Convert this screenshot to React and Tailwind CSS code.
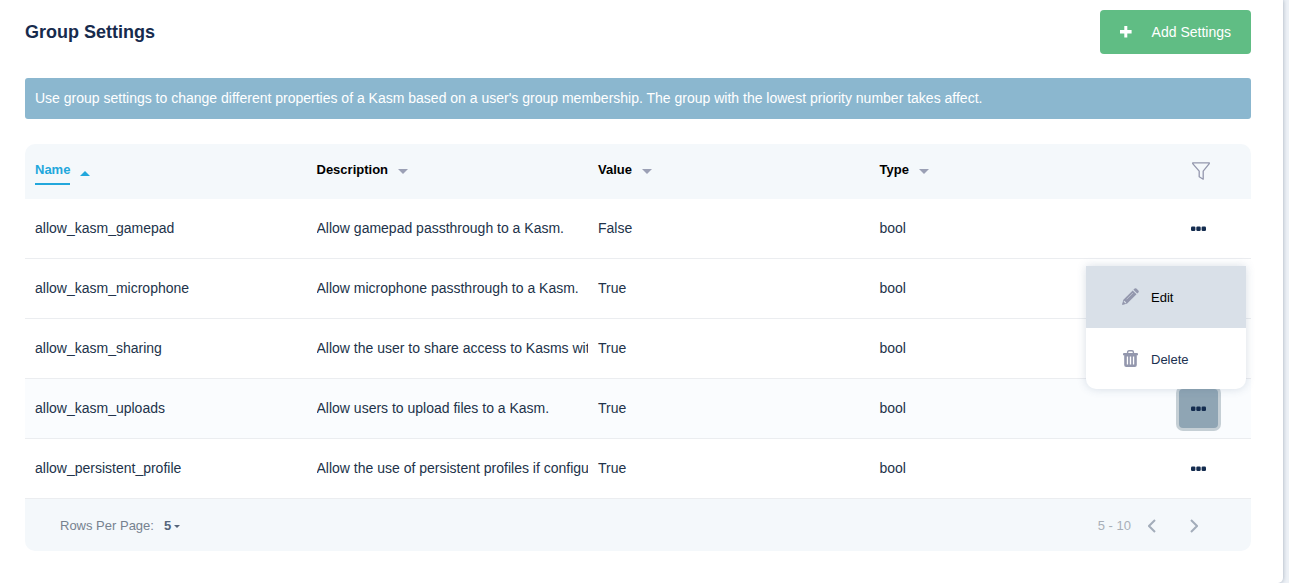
import { useState } from "react";

const columns = ["Name", "Description", "Value", "Type"];

const settings = [
    { name: "allow_kasm_gamepad", description: "Allow gamepad passthrough to a Kasm.", value: "False", type: "bool" },
    { name: "allow_kasm_microphone", description: "Allow microphone passthrough to a Kasm.", value: "True", type: "bool" },
    { name: "allow_kasm_sharing", description: "Allow the user to share access to Kasms with", value: "True", type: "bool" },
    { name: "allow_kasm_uploads", description: "Allow users to upload files to a Kasm.", value: "True", type: "bool" },
    { name: "allow_persistent_profile", description: "Allow the use of persistent profiles if configur", value: "True", type: "bool" },
];

const PlusIcon = () => (
    <svg width="12" height="12" viewBox="0 0 12 12" fill="currentColor" aria-hidden="true">
        <path d="M4.3 0H7.3V4H11.6V7.4H7.3V11.4H4.3V7.4H0V4H4.3Z" />
    </svg>
);

const CaretIcon = ({ up }) => (
    <svg width="10" height="7" viewBox="0 0 10 7" fill="currentColor" aria-hidden="true">
        <path d={up ? "M0 7L5 2L10 7Z" : "M0 0H10L5 5Z"} />
    </svg>
);

const FilterIcon = () => (
    <svg width="18" height="18" viewBox="0 0 18 18" fill="none" stroke="#9397ad" strokeWidth="1.3" strokeLinejoin="round" aria-hidden="true">
        <path d="M0.7 0.8H17.3V1.6L11.2 9.2V17.2L7.2 14.8V9.2L0.7 1.6Z" />
    </svg>
);

const DotsIcon = () => (
    <svg width="15" height="5" viewBox="0 0 15 5" fill="#142c4f" aria-hidden="true">
        <rect x="0" y="0.5" width="4.4" height="4.4" rx="1.2" />
        <rect x="5.3" y="0.5" width="4.4" height="4.4" rx="1.2" />
        <rect x="10.6" y="0.5" width="4.4" height="4.4" rx="1.2" />
    </svg>
);

const PencilIcon = () => (
    <svg width="17" height="17" viewBox="0 0 17 17" fill="#9397ad" aria-hidden="true">
        <path d="M11.4 1.8L12.6 0.6Q13.5 -0.2 14.4 0.6L16.4 2.6Q17.2 3.5 16.4 4.4L15.2 5.6Z" />
        <path d="M10.7 2.5L14.5 6.3L5.2 15.6L1.3 16.8Q-0.2 17.2 0.2 15.7L1.4 11.8Z" />
        <path d="M10.9 5L4.6 11.3" stroke="#c3c9d5" strokeWidth="0.8" />
        <path d="M2 13.2L3.8 15" stroke="#d9e0e8" strokeWidth="1.2" />
    </svg>
);

const TrashIcon = () => (
    <svg width="17" height="17" viewBox="0 0 17 17" aria-hidden="true">
        <path d="M5.6 3.4V2.2Q5.6 0.8 7 0.8H10Q11.4 0.8 11.4 2.2V3.4" fill="none" stroke="#9397ad" strokeWidth="1.4" />
        <path
            fill="#9397ad"
            fillRule="evenodd"
            d="M2 3H15Q16 3 16 4V5.2H1V4Q1 3 2 3ZM2.2 5.2H14.8V15Q14.8 17 12.8 17H4.2Q2.2 17 2.2 15ZM4.8 6.6V14.6H6.1V6.6ZM7.8 6.6V14.6H9.2V6.6ZM10.9 6.6V14.6H12.2V6.6Z"
        />
    </svg>
);

const Chevron = ({ d }) => (
    <svg width="8" height="14" viewBox="0 0 8 14" fill="none" stroke="#a3adba" strokeWidth="2" aria-hidden="true">
        <path d={d} />
    </svg>
);

const ActionMenu = () => (
    <div className="absolute right-[5px] bottom-[49px] z-10 w-40 overflow-hidden rounded-b-[10px] bg-white text-[13px] shadow-[0_0_10px_rgba(60,90,130,0.2)]">
        <button className="flex h-[62px] w-full items-center gap-3 bg-[#d9e0e8] pt-[2px] pl-9 text-black">
            <span className="mb-1">
                <PencilIcon />
            </span>
            Edit
        </button>
        <button className="flex h-[61px] w-full items-center gap-3 pt-[3px] pl-9 text-[#1b3150]">
            <span className="mb-1">
                <TrashIcon />
            </span>
            Delete
        </button>
    </div>
);

const SettingRow = ({ setting, open, onToggle }) => {
    const cell = "h-[60px] overflow-hidden border-b border-[#ebedf0] pb-[2px] pl-[10px] whitespace-nowrap";

    return (
        <tr className={open ? "bg-[#fafcfe]" : "bg-white"}>
            <td className={cell}>{setting.name}</td>
            <td className={cell}>
                <div className="overflow-hidden">{setting.description}</div>
            </td>
            <td className={cell}>{setting.value}</td>
            <td className={cell}>{setting.type}</td>
            <td className="h-[60px] border-b border-[#ebedf0] p-0">
                <div className="relative flex h-[59px] items-center justify-center pr-[5px]">
                    <button
                        aria-label={"Actions for " + setting.name}
                        aria-expanded={open}
                        onClick={onToggle}
                        className={
                            open
                                ? "flex h-[39px] w-[39px] items-center justify-center rounded bg-[#8fa5b4] ring-3 ring-[#c5cfd5]"
                                : "flex h-[39px] w-[39px] items-center justify-center rounded"
                        }
                    >
                        <DotsIcon />
                    </button>
                    {open && <ActionMenu />}
                </div>
            </td>
        </tr>
    );
};

const App = () => {
    const [openRow, setOpenRow] = useState("allow_kasm_uploads");

    return (
        <div className="bg-[#edf1f6] pr-[6px] font-['Liberation_Sans',Arial,sans-serif] text-sm text-[#22334a]">
            <main className="rounded-br-[5px] bg-white pt-[10px] pr-8 pb-8 pl-[25px] shadow-[0_0_4px_rgba(50,70,100,0.4)]">
                <div className="flex h-11 items-center justify-between">
                    <h1 className="text-lg font-bold text-[#172b4d]">Group Settings</h1>
                    <button className="flex h-11 items-center gap-5 rounded bg-[#60bd84] px-5 text-white">
                        <PlusIcon />
                        Add Settings
                    </button>
                </div>

                <p className="mt-6 rounded-[3px] bg-[#8bb7cf] px-[10px] py-[10px] leading-[21px] text-white">
                    Use group settings to change different properties of a Kasm based on a user's group membership. The group with the lowest
                    priority number takes affect.
                </p>

                <table className="mt-[25px] w-full table-fixed border-separate border-spacing-0">
                    <thead>
                        <tr className="text-[13px] text-black">
                            {columns.map((column, i) => (
                                <th
                                    key={column}
                                    scope="col"
                                    className="h-[55px] bg-[#f4f8fb] pt-[2px] pl-[10px] text-left align-middle font-bold first:rounded-tl-[10px]"
                                >
                                    <button className="flex items-center gap-[10px]">
                                        <span
                                            className={
                                                i === 0
                                                    ? "border-b-2 border-[#22a7dc] pb-[3px] leading-5 text-[#22a7dc]"
                                                    : "border-b-2 border-transparent pb-[3px] leading-5"
                                            }
                                        >
                                            {column}
                                        </span>
                                        <span className={i === 0 ? "text-[#22a7dc]" : "text-[#9ba0b5]"}>
                                            <CaretIcon up={i === 0} />
                                        </span>
                                    </button>
                                </th>
                            ))}
                            <th scope="col" className="w-[100px] rounded-tr-[10px] bg-[#f4f8fb] p-0 pb-[2px] align-middle">
                                <button aria-label="Filter" className="mx-auto block">
                                    <FilterIcon />
                                </button>
                            </th>
                        </tr>
                    </thead>
                    <tbody>
                        {settings.map((setting) => (
                            <SettingRow
                                key={setting.name}
                                setting={setting}
                                open={openRow === setting.name}
                                onToggle={() => setOpenRow(openRow === setting.name ? null : setting.name)}
                            />
                        ))}
                    </tbody>
                </table>

                <div className="flex h-[52px] items-center justify-between rounded-b-[10px] bg-[#f4f8fb] pt-[2px] pr-[53px] pl-[35px] text-[13px] text-[#76828f]">
                    <div className="flex items-center gap-[10px]">
                        <label htmlFor="rows">Rows Per Page:</label>
                        <div className="flex items-center gap-[2px] font-bold text-[#56657a]">
                            <select id="rows" defaultValue="5" className="w-2 appearance-none">
                                <option>5</option>
                                <option>10</option>
                                <option>25</option>
                            </select>
                            <svg width="6" height="3" viewBox="0 0 6 3" fill="currentColor" aria-hidden="true">
                                <path d="M0 0H6L3 3Z" />
                            </svg>
                        </div>
                    </div>
                    <div className="flex items-center text-[#a8afb8]">
                        <span className="mr-[17px]">5 - 10</span>
                        <button aria-label="Previous page" className="mr-[34px]">
                            <Chevron d="M7 1L1 7L7 13" />
                        </button>
                        <button aria-label="Next page">
                            <Chevron d="M1 1L7 7L1 13" />
                        </button>
                    </div>
                </div>
            </main>
        </div>
    );
};

export default App;
